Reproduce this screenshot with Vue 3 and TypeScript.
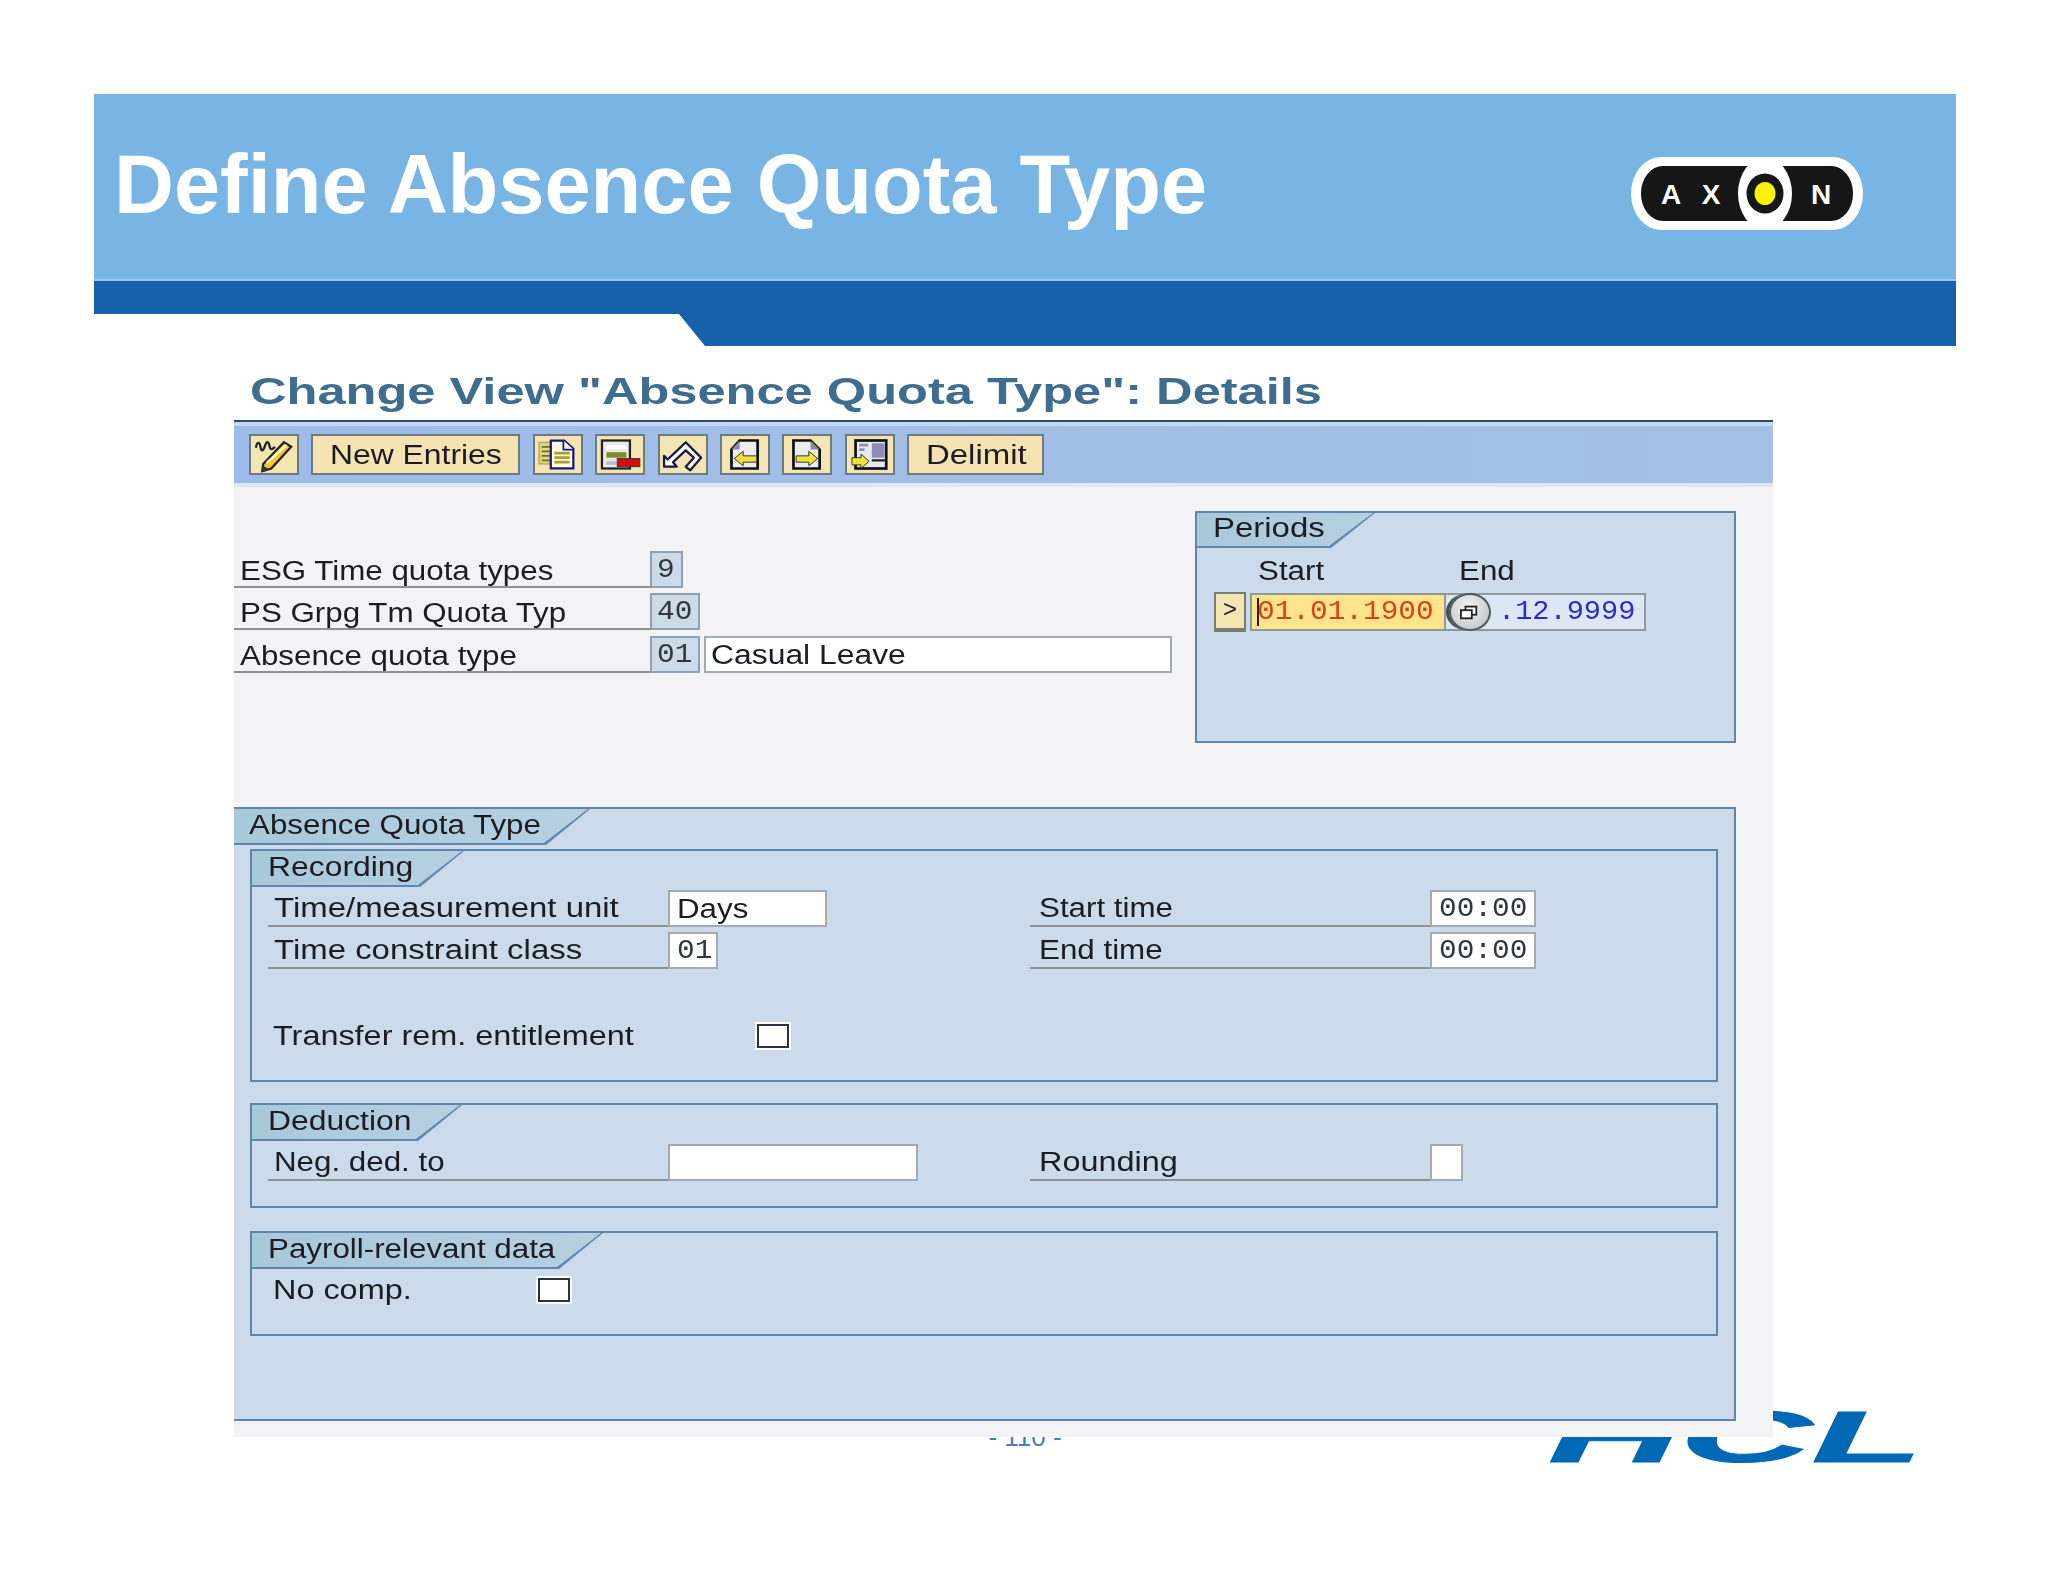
<script setup lang="ts">
interface Tab { label: string; width: number }
const mainTab: Tab = { label: 'Absence Quota Type', width: 356 }
</script>

<template>
  <div class="slide">
    <div class="footer-num">- 110 -</div>
    <div class="footer-hcl">HCL</div>

    <header class="banner">
      <div class="banner-top">
        <h1 class="headline">Define Absence Quota Type</h1>
        <svg class="axon" viewBox="0 0 232 73" aria-label="AXON logo">
          <rect width="232" height="73" rx="30" ry="36.5" fill="#fff" />
          <rect x="10" y="9" width="212" height="55" rx="22" ry="27" fill="#161616" />
          <ellipse cx="134" cy="36.5" rx="27" ry="36" fill="#fff" />
          <ellipse cx="134" cy="36.5" rx="18.5" ry="20" fill="#161616" />
          <ellipse cx="134" cy="36.5" rx="10.5" ry="11.5" fill="#fbf200" />
          <text x="40" y="46.5" class="axon-t" text-anchor="middle">A</text>
          <text x="80" y="46.5" class="axon-t" text-anchor="middle">X</text>
          <text x="190" y="46.5" class="axon-t" text-anchor="middle">N</text>
        </svg>
      </div>
      <div class="banner-band"></div>
    </header>

    <main class="sap">
      <div class="sap-title"><span class="sap-title-t">Change View "Absence Quota Type": Details</span></div>
      <div class="toolbar">
        <button class="tb icon">
          <svg viewBox="0 0 50 41">
            <path d="M5 13c1-7 4-7 5-1s3 5 5-1 4-5 5 0 3 4 6 1" fill="none" stroke="#222" stroke-width="2.5" />
            <path d="M13 31 36 7l8 5-22 24-10 3z" fill="#f2c431" stroke="#222" stroke-width="2.5" />
            <path d="M17 30 39 10" stroke="#fff6c0" stroke-width="3" />
            <path d="M11 40l2-7 7 4z" fill="#333" />
          </svg>
        </button>
        <button class="tb text b-new"><span class="s">New Entries</span></button>
        <button class="tb icon">
          <svg viewBox="0 0 50 41">
            <rect x="4" y="7" width="17" height="24" fill="#e6db60" stroke="#8a8a6a" />
            <path d="M7 12h11M7 17h11M7 22h11M7 27h11" stroke="#666" stroke-width="2" />
            <path d="M17 5h15l10 9v22H17z" fill="#fffbe0" stroke="#1c1680" stroke-width="2.5" />
            <path d="M31 5v10h11" fill="#fff" stroke="#1c1680" stroke-width="2" />
            <path d="M21 19h17M21 24h17M21 29h17" stroke="#a99f2a" stroke-width="3" />
          </svg>
        </button>
        <button class="tb icon">
          <svg viewBox="0 0 50 41">
            <rect x="5" y="5" width="31" height="31" fill="#e8e8e4" stroke="#222" stroke-width="2.5" />
            <rect x="10" y="10" width="22" height="5" fill="#fff" />
            <rect x="10" y="18" width="22" height="6" fill="#7c8c2c" />
            <rect x="10" y="28" width="12" height="4" fill="#bcbcd8" />
            <rect x="22" y="25" width="25" height="9" fill="#d40d12" stroke="#333" />
          </svg>
        </button>
        <button class="tb icon">
          <svg viewBox="0 0 50 41">
            <path d="M4 22v12h14l-4-5 14-13 9 8-9 10 5 4 12-14-17-17-20 19z" fill="#fff" stroke="#1c1648" stroke-width="2.5" stroke-linejoin="round" />
          </svg>
        </button>
        <button class="tb icon">
          <svg viewBox="0 0 50 41">
            <path d="M10 15 19 5h20v31H10z" fill="#ededf0" stroke="#111" stroke-width="3" />
            <path d="M10 15h9V5z" fill="#8a8ab0" />
            <path d="M13 25l10-8v5h15v7H23v4z" fill="#efe23a" stroke="#222" />
          </svg>
        </button>
        <button class="tb icon">
          <svg viewBox="0 0 50 41">
            <path d="M10 5h19l10 10v21H10z" fill="#ededf0" stroke="#111" stroke-width="3" />
            <path d="M29 5v10h10z" fill="#8c8c8c" />
            <path d="M37 25l-10-8v5H13v7h14v4z" fill="#efe23a" stroke="#222" />
          </svg>
        </button>
        <button class="tb icon">
          <svg viewBox="0 0 50 41">
            <rect x="9" y="5" width="34" height="31" fill="#e8e8f0" stroke="#111" stroke-width="3" />
            <rect x="27" y="8" width="14" height="16" fill="#8d8db8" />
            <path d="M13 10h10M13 15h6" stroke="#8d8db8" stroke-width="3" />
            <path d="M27 27h15" stroke="#222" stroke-width="2.5" />
            <path d="M24 28l-9-8v4H5v8h10v4z" fill="#efe23a" stroke="#222" />
          </svg>
        </button>
        <button class="tb text b-del"><span class="s x22">Delimit</span></button>
      </div>

      <div class="upper">
        <div class="keys">
          <div class="row">
            <div class="lab key-lab"><span class="s x16">ESG Time quota types</span></div>
            <div class="box ro w-33"><span class="m">9</span></div>
          </div>
          <div class="row">
            <div class="lab key-lab"><span class="s x16">PS Grpg Tm Quota Typ</span></div>
            <div class="box ro w-50"><span class="m">40</span></div>
          </div>
          <div class="row">
            <div class="lab key-lab"><span class="s x16">Absence quota type</span></div>
            <div class="box ro w-50"><span class="m">01</span></div>
            <div class="box wh desc"><span class="s">Casual Leave</span></div>
          </div>
        </div>

        <section class="group periods">
          <div class="tab tab-periods"><span class="s x22">Periods</span></div>
          <div class="per-head">
            <span class="s x16 per-start">Start</span>
            <span class="s x16">End</span>
          </div>
          <div class="per-row">
            <div class="per-btn"><span>&gt;</span></div>
            <div class="per-start-field"><i class="caret"></i><span class="m red">01.01.1900</span></div>
            <div class="per-end-field"><span class="m blue">.12.9999</span></div>
            <div class="per-circle">
              <svg viewBox="0 0 42 36">
                <rect x="16" y="12" width="12" height="9" fill="#fff" stroke="#222" stroke-width="2" />
                <rect x="11" y="16" width="12" height="9" fill="#fff" stroke="#222" stroke-width="2" />
              </svg>
            </div>
          </div>
        </section>
      </div>

      <section class="group main-sec">
        <div class="tab tab-main" :style="{ width: mainTab.width + 'px' }"><span class="s x16">{{ mainTab.label }}</span></div>

        <section class="group recording">
          <div class="tab tab-rec"><span class="s">Recording</span></div>
          <div class="pairs">
            <div class="row">
              <div class="lab pair-lab"><span class="s x22">Time/measurement unit</span></div>
              <div class="box wh w-159"><span class="s x16">Days</span></div>
            </div>
            <div class="row">
              <div class="lab pair-lab"><span class="s x16">Start time</span></div>
              <div class="box wh w-106"><span class="m">00:00</span></div>
            </div>
            <div class="row">
              <div class="lab pair-lab"><span class="s x22">Time constraint class</span></div>
              <div class="box wh w-50"><span class="m">01</span></div>
            </div>
            <div class="row">
              <div class="lab pair-lab"><span class="s x16">End time</span></div>
              <div class="box wh w-106"><span class="m">00:00</span></div>
            </div>
          </div>
          <div class="check-row transfer">
            <div class="check-lab l-transfer"><span class="s x20">Transfer rem. entitlement</span></div>
            <div class="check"></div>
          </div>
        </section>

        <section class="group deduction">
          <div class="tab tab-ded"><span class="s">Deduction</span></div>
          <div class="pairs">
            <div class="row">
              <div class="lab pair-lab"><span class="s x16">Neg. ded. to</span></div>
              <div class="box wh w-250"></div>
            </div>
            <div class="row">
              <div class="lab pair-lab"><span class="s x20">Rounding</span></div>
              <div class="box wh w-33"></div>
            </div>
          </div>
        </section>

        <section class="group payroll">
          <div class="tab tab-pay"><span class="s x16">Payroll-relevant data</span></div>
          <div class="check-row nocomp">
            <div class="check-lab l-nocomp"><span class="s x20">No comp.</span></div>
            <div class="check"></div>
          </div>
        </section>
      </section>
    </main>
  </div>
</template>

<style>
html, body { margin: 0; background: #fff; }
</style>

<style scoped>
.slide {
  position: relative;
  width: 2048px;
  height: 1582px;
  overflow: hidden;
  background: #fff;
  font-family: "Liberation Sans", Arial, sans-serif;
  color: #1c1c22;
}
.banner {
  position: relative;
  z-index: 1;
  margin: 0 92px 0 94px;
  padding-top: 94px;
}
.banner-top {
  height: 187px;
  background: #78b5e5;
  border-bottom: 2px solid #9cc6ea;
  box-sizing: border-box;
  display: flex;
  justify-content: space-between;
  padding: 44px 93px 0 20px;
}
.headline {
  margin: 0;
  color: #fff;
  font-size: 83px;
  line-height: 94px;
  font-weight: 700;
  white-space: nowrap;
}
.axon { width: 232px; height: 73px; margin-top: 19px; }
.axon-t { font-family: "Liberation Sans", Arial, sans-serif; font-weight: 700; font-size: 28px; fill: #fff; }
.banner-band {
  height: 65px;
  background: #1760ab;
  clip-path: polygon(0 0, 100% 0, 100% 100%, 611px 100%, 585px 33px, 0 33px);
}
.footer-num {
  position: absolute;
  left: 979px;
  top: 1423px;
  width: 92px;
  text-align: center;
  font-size: 26px;
  line-height: 29px;
  color: #4a7dbd;
  white-space: nowrap;
}
.footer-hcl {
  position: absolute;
  left: 1548px;
  top: 1395px;
  font-size: 73px;
  line-height: 84px;
  font-weight: 700;
  font-style: italic;
  color: #0068b5;
  transform: scaleX(2.5);
  transform-origin: 0 0;
  -webkit-text-stroke: 1px #0068b5;
}
.sap {
  position: relative;
  z-index: 2;
  margin: 19px 0 0 234px;
  width: 1539px;
  height: 1072px;
  background: #f3f3f5;
  box-sizing: border-box;
  filter: blur(0.4px);
}
.sap-title {
  height: 57px;
  background: #fff;
  padding-left: 16px;
  box-sizing: border-box;
  border-bottom: 2px solid #2c4a63;
}
.sap-title-t {
  display: inline-block;
  font-size: 37px;
  line-height: 44px;
  font-weight: 700;
  color: #3f6d90;
  white-space: nowrap;
  transform: scaleX(1.367);
  transform-origin: 0 0;
  margin-top: 5px;
}
.toolbar {
  height: 65px;
  box-sizing: border-box;
  background: linear-gradient(90deg, #9dbce9, #a4c1e4);
  border-top: 4px solid #c6d6ef;
  border-bottom: 4px solid #dde7f4;
  padding: 8px 0 0 15px;
  display: flex;
}
.tb {
  height: 41px;
  padding: 0;
  box-sizing: border-box;
  background: #f5e3b4;
  border: 2px solid #6f7a80;
  font: inherit;
  color: #1c1c22;
  margin-right: 12.4px;
  display: block;
}
.icon { width: 50px; background: #f3e6b2; }
.icon svg { display: block; width: 46px; height: 37px; }
.b-new { width: 209px; text-align: left; padding-left: 17px; }
.b-del { width: 137px; text-align: left; padding-left: 17px; }
.tb.text .s { line-height: 36px; }

.s {
  display: inline-block;
  white-space: nowrap;
  font-size: 27px;
  line-height: 30px;
  transform: scaleX(1.18);
  transform-origin: 0 50%;
}
.s.x16 { transform: scaleX(1.16); }
.s.x20 { transform: scaleX(1.2); }
.s.x22 { transform: scaleX(1.22); }
.m {
  display: inline-block;
  white-space: nowrap;
  font-family: "Liberation Mono", monospace;
  font-size: 27px;
  line-height: 30px;
  color: #33363d;
  transform: scaleX(1.09);
  transform-origin: 0 50%;
}
.upper {
  height: 320px;
  display: flex;
  justify-content: space-between;
  padding-right: 37px;
}
.keys { width: 938px; padding-top: 64px; display: flex; flex-direction: column; gap: 5px; }
.keys .row:last-child { margin-top: 1px; }
.row { display: flex; height: 37px; }
.lab {
  box-sizing: border-box;
  border-bottom: 2px solid #8d9296;
  display: flex;
  align-items: flex-end;
  padding: 0 0 0 6px;
}
.key-lab { width: 416px; }
.keys .box { padding-left: 5px; }
.box {
  box-sizing: border-box;
  border: 2px solid #a4abb0;
  padding-left: 7px;
  display: flex;
  align-items: center;
}
.ro { background: #cddbe8; border-color: #8ca2b4; }
.wh { background: #fff; }
.w-33 { width: 33px; }
.w-50 { width: 50px; }
.w-106 { width: 106px; }
.w-159 { width: 159px; }
.w-250 { width: 250px; }
.desc { width: 468px; margin-left: 4px; }
.desc .s { margin-top: 1px; }

.group {
  box-sizing: border-box;
  background: #cbdbeb;
  border: 2px solid #5f87ad;
}
.tab {
  position: relative;
  box-sizing: border-box;
  height: 36px;
  padding: 0 0 5px 16px;
  display: flex;
  align-items: center;
  background: #5f87ad;
  clip-path: polygon(0 0, 100% 0, calc(100% - 44px) 100%, 0 100%);
}
.tab::before {
  content: "";
  position: absolute;
  inset: 0 2px 2px 0;
  background: linear-gradient(90deg, #a8c9da, #b6d0e2);
  clip-path: polygon(0 0, 100% 0, calc(100% - 44px) 100%, 0 100%);
}
.tab .s { position: relative; }

.periods { width: 541px; height: 232px; margin-top: 24px; }
.tab-periods { width: 178px; height: 35px; }
.per-head { height: 30px; padding: 8px 0 0 61px; display: flex; }
.per-start { width: 201px; }
.per-row { position: relative; display: flex; margin: 6px 0 0 17px; align-items: flex-start; }
.per-btn {
  box-sizing: border-box;
  width: 32px;
  height: 40px;
  background: #f3e6b2;
  border: 2px solid #7b7b70;
  border-bottom-width: 4px;
  text-align: center;
  font-family: "Liberation Mono", monospace;
  font-size: 24px;
  line-height: 34px;
}
.per-start-field {
  position: relative;
  box-sizing: border-box;
  width: 196px;
  height: 38px;
  margin: 1px 0 0 4px;
  background: #ffe48c;
  border: 2px solid #8f9a90;
  padding-left: 5px;
  display: flex;
  align-items: center;
}
.caret { position: absolute; left: 5px; top: 3px; width: 2px; height: 28px; background: #222; }
.per-end-field {
  box-sizing: border-box;
  width: 200px;
  height: 38px;
  margin-top: 1px;
  background: #dce6f5;
  border: 2px solid #8f9a9c;
  border-left: 0;
  padding-left: 52px;
  display: flex;
  align-items: center;
}
.per-circle {
  position: absolute;
  left: 235px;
  top: 1px;
  width: 42px;
  height: 38px;
  box-sizing: border-box;
  border-radius: 50%;
  border: 2px solid #4d5a5c;
  background: radial-gradient(circle at 45% 35%, #f4f4f4, #b9bcbf);
  box-shadow: -4px 0 0 -1px #3e4c4c;
}
.per-circle svg { display: block; width: 38px; height: 34px; }
.red { color: #d8421c; }
.blue { color: #2a2ac6; transform: scaleX(1.06); }

.main-sec {
  width: 1502px;
  height: 614px;
  border-left: 0;
}
.tab-main { padding-left: 15px; }
.recording, .deduction, .payroll { margin-left: 16px; width: 1468px; }
.recording { margin-top: 4px; height: 233px; }
.deduction { margin-top: 21px; height: 105px; }
.payroll { margin-top: 23px; height: 105px; }
.tab-rec { width: 212px; }
.tab-ded { width: 210px; }
.tab-pay { width: 351px; }
.pairs {
  display: grid;
  grid-template-columns: 762px 1fr;
  row-gap: 5px;
  padding: 3px 0 0 16px;
}
.pair-lab { width: 400px; padding-bottom: 2px; }
.pairs .row:nth-child(even) .pair-lab { padding-left: 9px; }
.check-row { display: flex; align-items: center; height: 28px; }
.transfer { margin-top: 53px; }
.nocomp { margin-top: 7px; }
.check-lab { box-sizing: border-box; padding-left: 21px; }
.l-transfer { width: 503px; }
.l-nocomp { width: 284px; }
.check {
  box-sizing: border-box;
  width: 36px;
  height: 28px;
  background: #fff;
  border: 2px solid #fff;
  outline: 2px solid #2d3240;
  outline-offset: -4px;
}
</style>
